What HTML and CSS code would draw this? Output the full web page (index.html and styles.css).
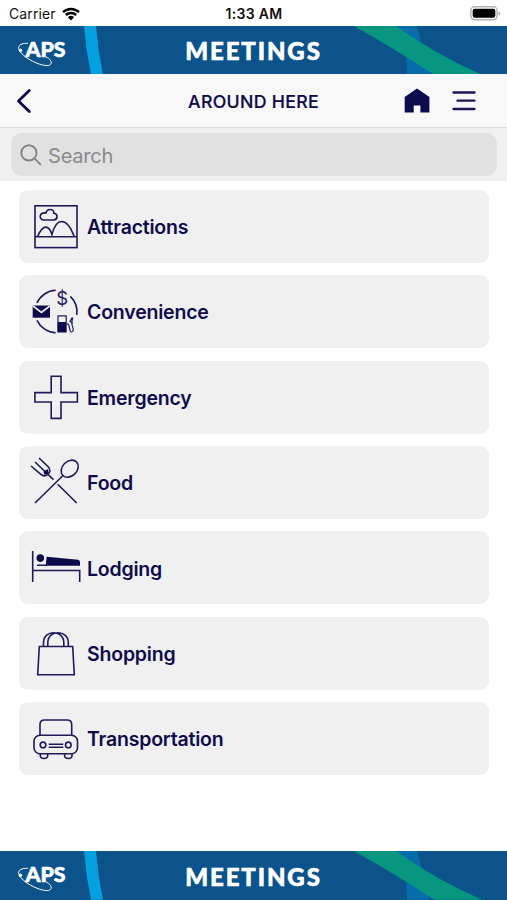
FILE: index.html
```html
<!DOCTYPE html>
<html lang="en">
<head>
    <meta charset="UTF-8">
    <meta name="viewport" content="width=device-width, initial-scale=1.0">
    <title>Around Here</title>
    <link rel="stylesheet" href="styles.css">
</head>
<body>

<div class="app">
    <div class="status-bar">
        <div class="carrier">
            <span>Carrier</span>
            <svg width="18" height="14" viewBox="0 0 18 14">
                <path d="M1 5.2a11.6 11.6 0 0 1 16 0M3.8 8a7.6 7.6 0 0 1 10.4 0" fill="none" stroke="#000" stroke-width="2.4"/>
                <path d="M9 13.4 5.9 10.3a4.5 4.5 0 0 1 6.2 0z"/>
            </svg>
        </div>
        <span class="time">1:33 AM</span>
        <svg class="battery" width="31" height="15" viewBox="0 0 31 15">
            <rect x="0.8" y="0.8" width="26.4" height="13" rx="4" fill="#fff" stroke="#b4b4b4" stroke-width="1.5"/>
            <rect x="2.7" y="2.8" width="22.6" height="9" rx="2"/>
            <path d="M28.6 5.2q1.6.7 1.6 2.2t-1.6 2.2z" fill="#aaa"/>
        </svg>
    </div>

    <div class="banner">
        <svg class="banner-art" viewBox="0 0 507 49" preserveAspectRatio="none">
            <path d="M84 0h12q2 25 7 49H91Q86 25 84 0z" fill="#05a0df"/>
            <path d="M395 0h22l13 49h-23q1-28-12-49z" fill="#076caa"/>
            <path d="M354 0h42q40 29 86 49h-48Q398 25 354 0z" fill="#079781"/>
            <g fill="none" stroke="#fff" stroke-width="1">
                <path d="M28 17.5C18 17 16 22 22 28c9 9 27 15 29 10 1-2-1-5-5-7"/>
                <circle cx="20.5" cy="24.5" r="1.3" fill="#fff"/>
            </g>
            <text class="logo-text" x="25.5" y="31.5" textLength="40" lengthAdjust="spacingAndGlyphs">APS</text>
        </svg>
        <span class="banner-title">MEETINGS</span>
    </div>

    <div class="nav">
        <svg class="back" width="18" height="26" viewBox="0 0 18 26"><path d="M15.3 2.5 4.5 13l10.8 10.5"/></svg>
        <h1>AROUND HERE</h1>
        <div class="nav-icons">
            <svg width="26" height="26" viewBox="0 0 26 26"><path d="M13 .5.7 9v15.600h9v-7h6.700v7h9V9z" fill="#0b0b4e"/></svg>
            <svg width="24" height="22" viewBox="0 0 24 22"><path d="M1.500 2.500h21M5.500 10.700h17M1.500 19h21" fill="none" stroke="#1b1650" stroke-width="2.300" stroke-linecap="round"/></svg>
        </div>
    </div>

    <div class="search-bar">
        <div class="search">
            <svg width="22" height="22" viewBox="0 0 22 22"><circle cx="8.9" cy="8.9" r="7.6"/><path d="m14.4 14.4 6 6"/></svg>
            <span>Search</span>
        </div>
    </div>

    <div class="list">
        <div class="item">
            <svg class="icon" viewBox="0 0 68 73">
                <rect x="16" y="15.8" width="42" height="41.8"/>
                <path d="M16 46.8h42M18.5 46.5c2.5-5.5 5-9.4 8.2-9.4 3.3 0 5 3.2 6.2 7.500 2-8 5.2-13.100 9.900-13.100 5.400 0 9.200 6.500 12.400 15"/>
                <path d="M24.500 30h10c4.700-.5 4.600-6.300.4-6.700.3-4.800-7-5.200-7.900-.3-7-1-7.500 6.300-2.500 7z"/>
            </svg>
            <span>Attractions</span>
        </div>
        <div class="item">
            <svg class="icon" viewBox="0 0 68 73">
                <path d="M18 28a21.5 21.5 0 0 1 18.7-12.7M51.3 21.3A21.5 21.5 0 0 1 57.7 40M18 45.300a21.5 21.5 0 0 0 18.700 12.400"/>
                <rect class="solid" x="13.7" y="30.5" width="17.3" height="12.2"/>
                <path d="m14 31 8.400 6.500 8.400-6.500" stroke="#efefef"/>
                <text class="dollar" x="37.200" y="30.300">$</text>
                <path class="solid" d="M38.300 47h9.400v10.500h-9.400z"/>
                <path d="M39 47v-6.200h8.200V47M48 49c3-1 2 8 4.300 8 2.500 0 2.300-3.500 1-6-1.500-3-.2-5.500.5-8.500M53.200 42.500l-2.200 4 3 1.500" stroke-width="1.200"/>
            </svg>
            <span>Convenience</span>
        </div>
        <div class="item">
            <svg class="icon" viewBox="0 0 68 73">
                <path d="M32.2 15.3h9.8v16.3h16.4v9.400H42v16.400h-9.800V41H15.900v-9.400h16.300z"/>
            </svg>
            <span>Emergency</span>
        </div>
        <div class="item">
            <svg class="icon" viewBox="0 0 68 73">
                <path d="m20 12 9.200 8.700q3.200 3.800-.2 7.400-3.600 3.500-7.400.1L12 20M16 16l10.500 10 8 7.700M38.700 38.300 57.700 57M44.300 29.200 16 57"/>
                <path d="m24.500 25.500 4.500-2.500.3 4-3.800 2z" class="solid"/>
                <ellipse cx="50.7" cy="22.7" rx="9.6" ry="7.3" transform="rotate(-45 50.7 22.7)"/>
            </svg>
            <span>Food</span>
        </div>
        <div class="item">
            <svg class="icon" viewBox="0 0 68 73">
                <path d="M13.700 20v31M13.700 39.500h47V51M18 34.300h10"/>
                <circle class="solid" cx="21.3" cy="27.1" r="3.8"/>
                <path class="solid" d="m27.600 25.700 31.600 3q1.800.5 1.800 2.600v3.400H26.700z"/>
            </svg>
            <span>Lodging</span>
        </div>
        <div class="item">
            <svg class="icon" viewBox="0 0 68 73">
                <path d="M20.3 29.500h33.400l1.600 28.300H18.700z"/>
                <path d="M24.500 29.300v-3.500c0-13.500 20.300-13.500 20.300 0v3.500M28.800 29.300v-3.500c0-13.500 20.500-13.500 20.500 0v3.500M32 16h10"/>
            </svg>
            <span>Shopping</span>
        </div>
        <div class="item">
            <svg class="icon" viewBox="0 0 68 73">
                <path d="M21 33.200V22.500q0-4.500 4.500-4.500h22.700q4.500 0 4.500 4.500v10.700"/>
                <rect x="15" y="33.200" width="43.500" height="18.600" rx="6"/>
                <circle cx="24" cy="42.900" r="2.800"/>
                <circle cx="49.300" cy="42.900" r="2.800"/>
                <path d="M29.700 42.200h14.600M29.700 45.300h14.600M21.300 52v1.500q0 3 3.700 3t3.700-3V52M45.600 52v1.500q0 3 3.700 3t3.700-3V52"/>
            </svg>
            <span>Transportation</span>
        </div>
    </div>

    <div class="banner">
        <svg class="banner-art" viewBox="0 0 507 49" preserveAspectRatio="none">
            <path d="M84 0h12q2 25 7 49H91Q86 25 84 0z" fill="#05a0df"/>
            <path d="M395 0h22l13 49h-23q1-28-12-49z" fill="#076caa"/>
            <path d="M354 0h42q40 29 86 49h-48Q398 25 354 0z" fill="#079781"/>
            <g fill="none" stroke="#fff" stroke-width="1">
                <path d="M28 17.5C18 17 16 22 22 28c9 9 27 15 29 10 1-2-1-5-5-7"/>
                <circle cx="20.5" cy="24.5" r="1.3" fill="#fff"/>
            </g>
            <text class="logo-text" x="25.5" y="31.5" textLength="40" lengthAdjust="spacingAndGlyphs">APS</text>
        </svg>
        <span class="banner-title">MEETINGS</span>
    </div>
</div>

</body>
</html>
```
FILE: styles.css
```css
* { box-sizing: border-box; }
body { margin: 0; font-family: Inter, 'Liberation Sans', sans-serif; background-color: #fff; color: #0f0b4a; }
.app { display: flex; flex-direction: column; height: 900px; overflow: hidden; }

/* Status bar */
.status-bar { display: grid; grid-template-columns: 1fr auto 1fr; align-items: center; height: 25.5px; padding: 2px 6px 0 9px; color: #111; font-size: 14px; flex: none; }
.carrier { display: flex; align-items: center; gap: 6px; letter-spacing: 0.1px; }
.time { font-weight: 600; font-size: 14px; letter-spacing: 0.3px; margin-right: 2px; }
.battery { justify-self: end; }

/* Banner (top and bottom) */
.banner { position: relative; display: flex; align-items: center; justify-content: center; height: 48.7px; background-color: #0c528b; flex: none; }
.banner-art { position: absolute; top: 0; left: 0; width: 100%; height: 100%; }
.logo-text { font-family: Lato, sans-serif; font-weight: 900; font-size: 20.5px; fill: #fff; stroke: #fff; stroke-width: 0.6px; }
.banner-title { position: relative; padding-top: 2px; font-family: Lato, sans-serif; font-weight: 900; font-size: 24px; letter-spacing: 1.9px; color: #fff; -webkit-text-stroke: 0.6px #fff; }

/* Navigation */
.nav { display: grid; grid-template-columns: 1fr auto 1fr; align-items: center; height: 53.8px; padding: 0 14px; background-color: #f8f8f8; border-bottom: 1.5px solid #dedede; flex: none; }
.nav h1 { margin: 2px 0 0; font-size: 17.7px; font-weight: 500; letter-spacing: 0.3px; -webkit-text-stroke: 0.2px #0f0b4a; }
.back { fill: none; stroke: #0f0b4a; stroke-width: 2.8; stroke-linecap: round; stroke-linejoin: round; }
.nav-icons { display: flex; align-items: center; justify-content: flex-end; gap: 22px; margin-right: 17px; }

/* Search */
.search-bar { height: 53.5px; padding: 5px 10px 0 11px; background-color: #f0f0f0; flex: none; }
.search { display: flex; align-items: center; gap: 6px; height: 43.5px; padding-left: 9px; border-radius: 11px; background-color: #e1e1e1; color: #8a8a8d; font-size: 20px; letter-spacing: -0.2px; }
.search span { padding-top: 2px; }
.search svg { fill: none; stroke: #858587; stroke-width: 1.9; stroke-linecap: round; }

/* Category list */
.list { display: flex; flex-direction: column; gap: 12.4px; flex: 1; padding: 8.3px 18.5px 0 19px; }
.item { display: flex; align-items: center; height: 73px; border-radius: 9px; background-color: #f0f0f0; font-size: 19.5px; font-weight: 600; letter-spacing: -0.2px; flex: none; }
.item span { padding-top: 1.5px; }
.icon { width: 68px; height: 73px; fill: none; stroke: #1f1a5a; stroke-width: 1.6; flex: none; }
.icon .solid { fill: #0d0a4c; stroke: none; }
.dollar { font-size: 18.5px; font-weight: 400; fill: #1f1a5a; stroke: none; }
```
